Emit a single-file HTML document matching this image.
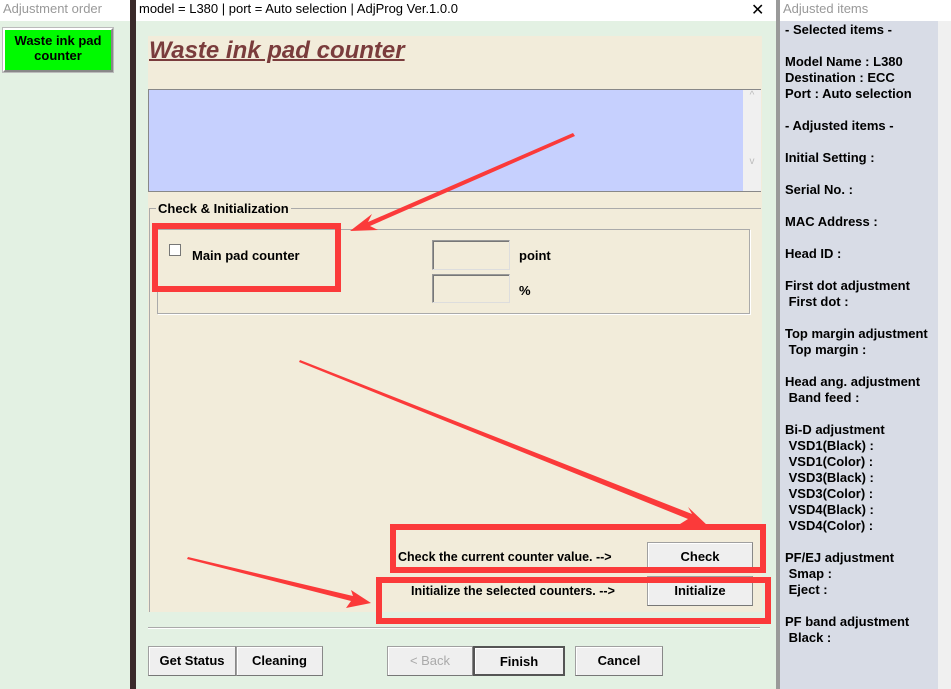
<!DOCTYPE html><html><head><style>
*{margin:0;padding:0;box-sizing:border-box}
body{width:951px;height:689px;overflow:hidden;position:relative;background:#e3f1e3;font-family:"Liberation Sans",Arial,sans-serif}
.a{position:absolute}
.b{font-weight:bold;font-size:13px;color:#000}
.btn{position:absolute;background:#efefef;border:1px solid #a0a0a0;border-right-color:#888;border-bottom-color:#777;font:bold 13px "Liberation Sans",sans-serif;text-align:center;box-shadow:inset 1px 1px #fff}
.tb{position:absolute;background:#f2ecda;border:1px solid #999;border-right-color:#ddd;border-bottom-color:#ddd;box-shadow:inset 1px 1px #777}
.rb{position:absolute;border:6px solid #fb3a3a}
</style></head><body>
<div class="a" style="left:0;top:0;width:130px;height:21px;background:#fff;color:#999;font-size:13px;padding:1px 3px">Adjustment order</div>
<div class="a" style="left:3px;top:28px;width:110px;height:44px;background:#00fa00;border:2px solid #fff;border-right-color:#888;border-bottom-color:#888;outline:1px solid #bbb;text-align:center;font-weight:bold;font-size:13px;line-height:15px;padding-top:3px">Waste ink pad<br>counter</div>
<div class="a" style="left:130px;top:0;width:6px;height:689px;background:#3a2a2a"></div>
<div class="a" style="left:136px;top:0;width:640px;height:21px;background:#fff;font-size:13px;padding:1px 3px">model = L380 | port = Auto selection | AdjProg Ver.1.0.0<span style="position:absolute;left:615px;top:0;font-size:16px">✕</span></div>
<div class="a" style="left:148px;top:36px;width:614px;height:576px;background:#f2ecda"></div>
<div class="a" style="left:149px;top:37px;font:italic bold 24px 'Liberation Sans',sans-serif;color:#7a3c3c;text-decoration:underline;text-decoration-thickness:2px">Waste ink pad counter</div>
<div class="a" style="left:148px;top:89px;width:613px;height:103px;background:#c6d0fe;border:1px solid #888;border-right:none"></div>
<div class="a" style="left:743px;top:90px;width:18px;height:101px;background:#f0f0f0;color:#bbb;font-size:10px;text-align:center">^<br><br><br><br><br><br>v</div>
<div class="a" style="left:149px;top:208px;width:612px;height:404px;border-top:1px solid #aaa;border-left:1px solid #aaa"></div>
<div class="a b" style="left:156px;top:201px;background:#f2ecda;padding:0 2px">Check &amp; Initialization</div>
<div class="a" style="left:157px;top:229px;width:593px;height:85px;border:1px solid #aaa;box-shadow:1px 1px #fff"></div>
<div class="a" style="left:169px;top:244px;width:12px;height:12px;background:#fff;border:1px solid #777"></div>
<div class="a b" style="left:192px;top:248px">Main pad counter</div>
<div class="tb" style="left:432px;top:240px;width:78px;height:30px"></div>
<div class="tb" style="left:432px;top:274px;width:78px;height:29px"></div>
<div class="a b" style="left:519px;top:248px">point</div>
<div class="a b" style="left:519px;top:283px">%</div>
<div class="a b" style="left:398px;top:550px;font-size:12.5px">Check the current counter value. --&gt;</div>
<div class="a b" style="left:411px;top:584px;font-size:12.5px">Initialize the selected counters. --&gt;</div>
<div class="btn" style="left:647px;top:542px;width:106px;height:29px;line-height:27px">Check</div>
<div class="btn" style="left:647px;top:576px;width:106px;height:30px;line-height:28px">Initialize</div>
<div class="a" style="left:148px;top:627px;width:612px;height:2px;border-top:1px solid #aaa;border-bottom:1px solid #fff"></div>
<div class="btn" style="left:148px;top:646px;width:88px;height:30px;line-height:28px">Get Status</div>
<div class="btn" style="left:236px;top:646px;width:87px;height:30px;line-height:28px">Cleaning</div>
<div class="btn" style="left:387px;top:646px;width:86px;height:30px;line-height:28px;color:#aaa;font-weight:normal">&lt; Back</div>
<div class="btn" style="left:473px;top:646px;width:92px;height:30px;line-height:28px;border:2px solid #555">Finish</div>
<div class="btn" style="left:575px;top:646px;width:88px;height:30px;line-height:28px">Cancel</div>
<div class="a" style="left:776px;top:0;width:4px;height:689px;background:#9a9a9a"></div>
<div class="a" style="left:780px;top:0;width:171px;height:21px;background:#fff;color:#999;font-size:13px;padding:1px 3px">Adjusted items</div>
<div class="a" style="left:780px;top:21px;width:158px;height:668px;background:#d8dce6"></div>
<div class="a" style="left:938px;top:21px;width:13px;height:668px;background:#f0f0f0"></div>
<div class="a b" style="left:785px;top:22px;line-height:16px;white-space:pre">- Selected items -

Model Name : L380
Destination : ECC
Port : Auto selection

- Adjusted items -

Initial Setting :

Serial No. :

MAC Address :

Head ID :

First dot adjustment
 First dot :

Top margin adjustment
 Top margin :

Head ang. adjustment
 Band feed :

Bi-D adjustment
 VSD1(Black) :
 VSD1(Color) :
 VSD3(Black) :
 VSD3(Color) :
 VSD4(Black) :
 VSD4(Color) :

PF/EJ adjustment
 Smap :
 Eject :

PF band adjustment
 Black :</div>
<div class="rb" style="left:152px;top:223px;width:189px;height:69px"></div>
<div class="rb" style="left:390px;top:524px;width:376px;height:49px"></div>
<div class="rb" style="left:376px;top:577px;width:395px;height:47px"></div>
<svg class="a" style="left:0;top:0" width="951" height="689">
<g fill="#fb3a3a">
<polygon points="573,133 368,222 372,214 350,231 378,230 370,226 575,136"/>
<polygon points="300,360 692,514 688,507 708,526 680,524 688,519 299,362"/>
<polygon points="188,557 353,596 351,590 371,603 346,608 351,601 187,559"/>
</g></svg>
</body></html>
